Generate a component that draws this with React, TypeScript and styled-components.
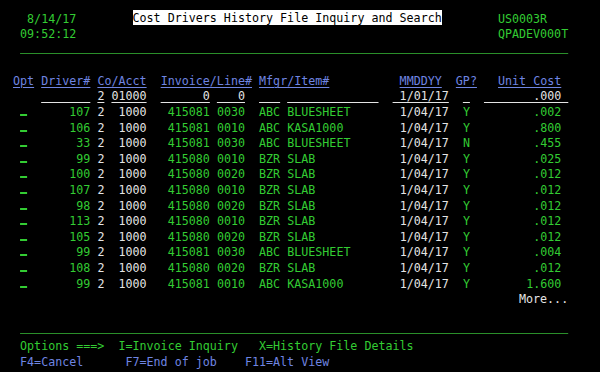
import React from "react";
import styled, { createGlobalStyle, css } from "styled-components";

const GlobalStyle = createGlobalStyle`
  html, body {
    margin: 0;
    height: 100%;
    background: #000;
    overflow: hidden;
  }
`;

type Tone = "green" | "white" | "blue" | "rule";

const palette: Record<Tone, string> = {
  green: "#33cc33",
  white: "#e4e4e4",
  blue: "#6f85e2",
  rule: "#2a8f2a",
};

const Screen = styled.div`
  width: 600px;
  height: 372px;
  box-sizing: border-box;
  padding: 11.5px 0 0 6px;
  background: #000;
  font-family: "DejaVu Sans Mono", "Liberation Mono", monospace;
  font-size: 11.68px;
`;

const Row = styled.div`
  height: 15.6px;
  line-height: 15.6px;
  white-space: pre;
`;

const Field = styled.span<{ $tone: Tone; $ul?: boolean; $thick?: boolean }>`
  color: ${(p) => palette[p.$tone]};
  ${(p) =>
    p.$ul &&
    css`
      text-decoration: underline;
      text-decoration-color: ${palette[p.$tone]};
      text-decoration-thickness: ${p.$thick ? "2px" : "1px"};
      text-underline-offset: ${p.$thick ? "-2px" : p.$tone === "rule" ? "-1px" : "2px"};
    `}
`;

const Title = styled.span`
  display: inline-block;
  vertical-align: top;
  box-sizing: border-box;
  margin-top: -1.5px;
  padding-top: 1.5px;
  height: 15.4px;
  line-height: 13.9px;
  background: #fff;
  color: #000;
`;

type Seg = {
  col: number;
  text: string;
  tone?: Tone;
  ul?: boolean;
  thick?: boolean;
  title?: boolean;
};

const s = (col: number, text: string, tone: Tone = "green", ul = false): Seg => ({ col, text, tone, ul });

const padL = (v: string, n: number) => v.padStart(n, " ");

type Rec = {
  driver: string;
  inv: string;
  line: string;
  mfgr: string;
  item: string;
  gp: string;
  cost: string;
};

const records: Rec[] = [
  { driver: "107", inv: "415081", line: "0030", mfgr: "ABC", item: "BLUESHEET", gp: "Y", cost: ".002" },
  { driver: "106", inv: "415081", line: "0010", mfgr: "ABC", item: "KASA1000", gp: "Y", cost: ".800" },
  { driver: "33", inv: "415081", line: "0030", mfgr: "ABC", item: "BLUESHEET", gp: "N", cost: ".455" },
  { driver: "99", inv: "415080", line: "0010", mfgr: "BZR", item: "SLAB", gp: "Y", cost: ".025" },
  { driver: "100", inv: "415080", line: "0020", mfgr: "BZR", item: "SLAB", gp: "Y", cost: ".012" },
  { driver: "107", inv: "415080", line: "0010", mfgr: "BZR", item: "SLAB", gp: "Y", cost: ".012" },
  { driver: "98", inv: "415080", line: "0020", mfgr: "BZR", item: "SLAB", gp: "Y", cost: ".012" },
  { driver: "113", inv: "415080", line: "0010", mfgr: "BZR", item: "SLAB", gp: "Y", cost: ".012" },
  { driver: "105", inv: "415080", line: "0020", mfgr: "BZR", item: "SLAB", gp: "Y", cost: ".012" },
  { driver: "99", inv: "415081", line: "0030", mfgr: "ABC", item: "BLUESHEET", gp: "Y", cost: ".004" },
  { driver: "108", inv: "415080", line: "0020", mfgr: "BZR", item: "SLAB", gp: "Y", cost: ".012" },
  { driver: "99", inv: "415081", line: "0010", mfgr: "ABC", item: "KASA1000", gp: "Y", cost: "1.600" },
];

const recordRow = (r: Rec): Seg[] => [
  { col: 2, text: " ", tone: "green", ul: true, thick: true },
  s(5, padL(r.driver, 7)),
  s(13, "2", "white"),
  s(16, "1000", "white"),
  s(23, r.inv),
  s(30, r.line),
  s(36, r.mfgr),
  s(40, r.item),
  s(56, "1/04/17", "white"),
  s(65, r.gp),
  s(68, padL(r.cost, 11)),
];

const rule = " ".repeat(78);

const screen: Seg[][] = [
  [
    s(3, "8/14/17"),
    { col: 18, text: "Cost Drivers History File Inquiry and Search", title: true },
    s(70, "US0003R"),
  ],
  [s(2, "09:52:12"), s(70, "QPADEV000T")],
  [s(2, rule, "rule", true)],
  [],
  [
    s(1, "Opt", "blue", true),
    s(5, "Driver#", "blue", true),
    s(13, "Co/Acct", "blue", true),
    s(22, "Invoice/Line#", "blue", true),
    s(36, "Mfgr/Item#", "blue", true),
    s(56, "MMDDYY", "blue", true),
    s(64, "GP?", "blue", true),
    s(70, "Unit Cost", "blue", true),
  ],
  [
    s(5, "       ", "white", true),
    s(13, "2", "white", true),
    s(15, "01000", "white", true),
    s(22, "      0", "white", true),
    s(30, "   0", "white", true),
    s(36, "   ", "white", true),
    s(40, " ".repeat(13), "white", true),
    s(55, " 1/01/17", "white", true),
    s(65, " ", "white", true),
    s(68, "       .000 ", "white", true),
  ],
  ...records.map(recordRow),
  [s(73, "More...", "white")],
  [],
  [s(2, rule, "rule", true)],
  [s(2, "Options ===>"), s(16, "I=Invoice Inquiry"), s(36, "X=History File Details")],
  [s(2, "F4=Cancel", "blue"), s(17, "F7=End of job", "blue"), s(34, "F11=Alt View", "blue")],
];

function TermLine({ segs }: { segs: Seg[] }) {
  let pos = 0;
  const out: React.ReactNode[] = [];
  segs.forEach((g, i) => {
    if (g.col > pos) out.push(" ".repeat(g.col - pos));
    out.push(
      g.title ? (
        <Title key={i}>{g.text}</Title>
      ) : (
        <Field key={i} $tone={g.tone ?? "green"} $ul={g.ul} $thick={g.thick}>
          {g.text}
        </Field>
      )
    );
    pos = g.col + g.text.length;
  });
  return <Row>{out.length ? out : " "}</Row>;
}

export default function App() {
  return (
    <>
      <GlobalStyle />
      <Screen>
        {screen.map((segs, i) => (
          <TermLine key={i} segs={segs} />
        ))}
      </Screen>
    </>
  );
}
